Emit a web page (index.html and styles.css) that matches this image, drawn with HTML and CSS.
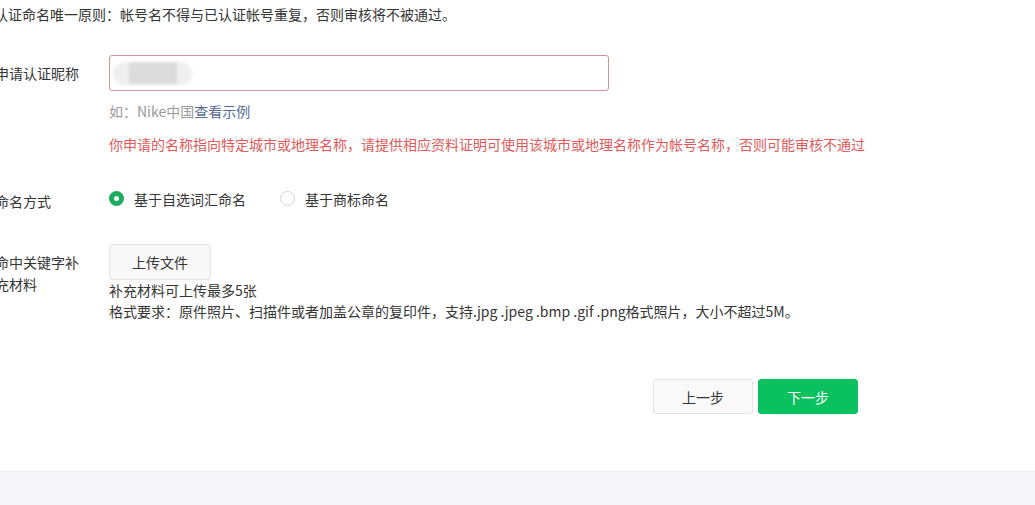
FILE: index.html
```html
<!DOCTYPE html>
<html lang="zh-CN">
<head>
<meta charset="utf-8">
<title>认证命名</title>
<link rel="stylesheet" href="styles.css">
</head>
<body>
<div class="page">
  <p class="notice">认证命名唯一原则：帐号名不得与已认证帐号重复，否则审核将不被通过。</p>
  <div class="form">
    <div class="row row-name">
      <div class="label">申请认证昵称</div>
      <div class="field">
        <div class="input">
          <span class="blur"><span class="blur-core"></span></span>
        </div>
        <p class="hint">如：Nike中国<a class="link">查看示例</a></p>
        <p class="warn">你申请的名称指向特定城市或地理名称，请提供相应资料证明可使用该城市或地理名称作为帐号名称，否则可能审核不通过</p>
      </div>
    </div>
    <div class="row row-mode">
      <div class="label">命名方式</div>
      <div class="field radios">
        <span class="radio"><i class="dot checked"></i>基于自选词汇命名</span>
        <span class="radio"><i class="dot"></i>基于商标命名</span>
      </div>
    </div>
    <div class="row row-upload">
      <div class="label">命中关键字补充材料</div>
      <div class="field">
        <button class="btn upload">上传文件</button>
        <p class="tip">补充材料可上传最多5张</p>
        <p class="tip">格式要求：原件照片、扫描件或者加盖公章的复印件，支持.jpg .jpeg .bmp .gif .png格式照片，大小不超过5M。</p>
      </div>
    </div>
  </div>
  <div class="actions">
    <button class="btn step prev">上一步</button>
    <button class="btn step next">下一步</button>
  </div>
</div>
<div class="footer"></div>
</body>
</html>
```

FILE: styles.css
```css
html, body {
  margin: 0;
  padding: 0;
  background: #ffffff;
}
body {
  font-family: "Noto Sans CJK SC", "Microsoft YaHei", sans-serif;
  font-size: 14px;
  color: #353535;
  overflow: hidden;
  text-spacing-trim: space-all;
}
p { margin: 0; }
.page {
  height: 471px;
  box-sizing: border-box;
  padding-top: 4px;
  overflow: hidden;
}
.notice {
  line-height: 20px;
  margin-left: -6px;
  white-space: nowrap;
}
.form {
  margin-left: -5px;
}
.row {
  display: flex;
  gap: 24px;
}
.label {
  width: 90px;
  flex: none;
}
.row-name { margin-top: 31px; }
.row-name .label { line-height: 36px; }
.input {
  width: 495px;
  height: 34px;
  border: 1px solid #d3939b;
  border-radius: 3px;
  display: flex;
  align-items: center;
  padding-left: 3px;
}
.blur {
  width: 79px;
  height: 23px;
  border-radius: 12px;
  background: #efefef;
  display: flex;
  align-items: center;
  justify-content: center;
  filter: blur(1.5px);
}
.blur-core {
  width: 48px;
  height: 22px;
  background: #dcdcdc;
}
.hint {
  margin-top: 10px;
  line-height: 20px;
  color: #9a9a9a;
}
.link {
  color: #576b95;
  cursor: pointer;
}
.warn {
  margin-top: 13px;
  line-height: 20px;
  color: #e05a5a;
  white-space: nowrap;
}
.row-mode { margin-top: 32px; }
.row-mode .label { padding-top: 5px; line-height: 20px; }
.radios {
  display: flex;
  gap: 34px;
  line-height: 20px;
}
.radio {
  display: flex;
  align-items: center;
  gap: 10px;
}
.dot {
  width: 15px;
  height: 15px;
  box-sizing: border-box;
  border-radius: 50%;
  border: 1px solid #d6d6d6;
  background: #fff;
  display: inline-block;
}
.dot.checked {
  border: 5px solid #1aad5f;
  background: #fff;
}
.row-upload { margin-top: 33px; }
.row-upload .label { padding-top: 7px; line-height: 22px; }
.btn {
  font-family: inherit;
  font-size: 14px;
  cursor: pointer;
  border-radius: 3px;
}
.upload {
  width: 102px;
  height: 36px;
  background: #f8f8f8;
  border: 1px solid #e4e4e4;
  color: #353535;
  display: block;
}
.tip {
  line-height: 21px;
  white-space: nowrap;
}
.actions {
  margin-top: 57px;
  padding-left: 653px;
  display: flex;
  gap: 5px;
}
.step {
  width: 100px;
  height: 35px;
}
.prev {
  background: #f9f9f9;
  border: 1px solid #e4e4e4;
  color: #353535;
}
.next {
  background: #0ac160;
  border: 1px solid #0ac160;
  color: #ffffff;
}
.footer {
  height: 34px;
  background: #f6f6f8;
  border-top: 1px solid #eeeef0;
}
```
